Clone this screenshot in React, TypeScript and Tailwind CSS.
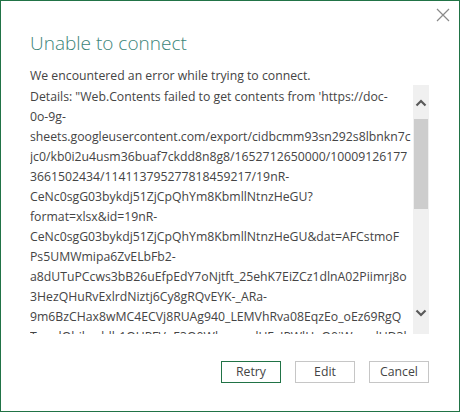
const detailLines = [
  "Details: \"Web.Contents failed to get contents from 'https://doc-",
  "0o-9g-",
  "sheets.googleusercontent.com/export/cidbcmm93sn292s8lbnkn7c",
  "jc0/kb0i2u4usm36buaf7ckdd8n8g8/1652712650000/10009126177",
  "3661502434/114113795277818459217/19nR-",
  "CeNc0sgG03bykdj51ZjCpQhYm8KbmllNtnzHeGU?",
  "format=xlsx&id=19nR-",
  "CeNc0sgG03bykdj51ZjCpQhYm8KbmllNtnzHeGU&dat=AFCstmoF",
  "Ps5UMWmipa6ZvELbFb2-",
  "a8dUTuPCcws3bB26uEfpEdY7oNjtft_25ehK7EiZCz1dlnA02Piimrj8o",
  "3HezQHuRvExlrdNiztj6Cy8gRQvEYK-_ARa-",
  "9m6BzCHax8wMC4ECVj8RUAg940_LEMVhRva08EqzEo_oEz69RgQ",
  "TaqulQhibuddb1QUPFVuE3Q0WhzzwndUEsIPWlHoO0iWmodUD3b",
];

function ScrollBar() {
  return (
    <div className="flex w-4 shrink-0 flex-col bg-[#f0f0f0]">
      <div className="flex h-[34px] items-center justify-center pt-[2px]">
        <svg width="12" height="8" viewBox="0 0 12 8">
          <path d="M1.5 6.5 L6 2 L10.5 6.5" fill="none" stroke="#5a5a5a" strokeWidth="2.2" />
        </svg>
      </div>
      <div className="mx-px h-[90px] bg-[#cdcdcd]" />
      <div className="flex-1" />
      <div className="flex h-[42px] items-center justify-center">
        <svg width="12" height="8" viewBox="0 0 12 8">
          <path d="M1.5 1.5 L6 6 L10.5 1.5" fill="none" stroke="#5a5a5a" strokeWidth="2.2" />
        </svg>
      </div>
    </div>
  );
}

export default function App() {
  return (
    <div
      className="flex h-[412px] w-[460px] flex-col border border-[#217346] bg-white text-[#444444]"
      style={{ fontFamily: '"Open Sans", "Noto Sans", sans-serif' }}
    >
      <div className="flex justify-end pr-[9px] pt-[7px]">
        <svg width="14" height="14" viewBox="0 0 14 14">
          <path d="M1 1 L13 13 M13 1 L1 13" stroke="#8a8a8a" strokeWidth="1.2" />
        </svg>
      </div>
      <h1 className="mt-[7px] pl-[29px] text-[19px] font-light leading-7 text-[#3a8478]">
        Unable to connect
      </h1>
      <p className="mt-[9px] pl-[29px] text-[12.25px] leading-5">
        We encountered an error while trying to connect.
      </p>
      <div className="-mt-px flex h-[249px] pl-[29px] pr-[30px]">
        <div className="flex-1 overflow-hidden pt-[2px] text-[12.25px] leading-5">
          {detailLines.map((line) => (
            <div key={line} className="whitespace-nowrap">
              {line}
            </div>
          ))}
        </div>
        <ScrollBar />
      </div>
      <div className="mt-[27px] flex justify-end gap-[14px] pr-[30px]">
        <button className="h-[22px] w-[60px] border border-[#217346] text-[12.25px] leading-none">Retry</button>
        <button className="h-[22px] w-[60px] border border-[#c6c6c6] text-[12.25px] leading-none">Edit</button>
        <button className="h-[22px] w-[60px] border border-[#c6c6c6] text-[12.25px] leading-none">Cancel</button>
      </div>
    </div>
  );
}
